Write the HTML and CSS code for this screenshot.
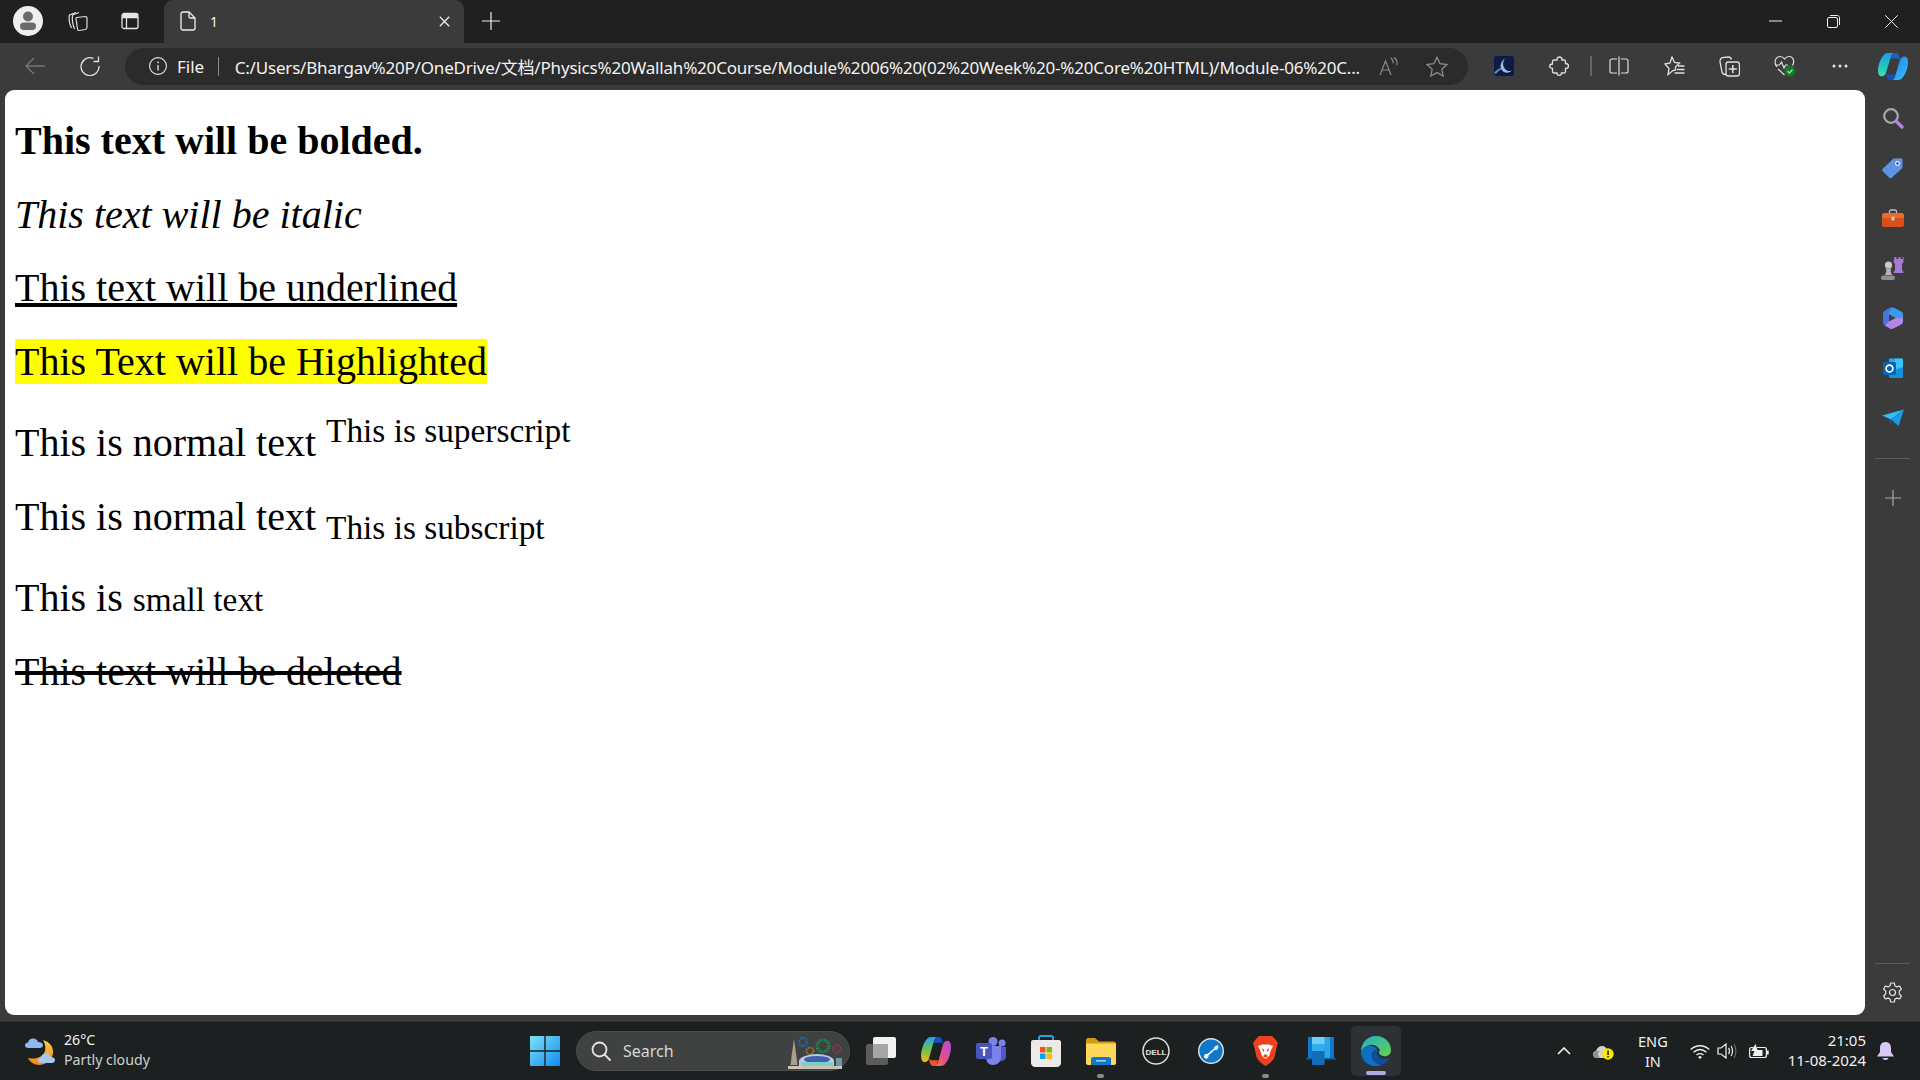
FILE: index.html
```html
<!DOCTYPE html>
<html lang="en">
<head>
<meta charset="utf-8">
<title>1</title>
<link rel="stylesheet" href="styles.css">
</head>
<body>
<div class="tabstrip">
  <svg class="profile" width="30" height="30" viewBox="0 0 30 30"><circle cx="15" cy="15" r="15" fill="#eee"/><circle cx="15" cy="10.500" r="5" fill="#6b6b6b"/><rect x="7" y="16.500" width="16" height="7.500" rx="3.750" fill="#6b6b6b"/></svg>
  <svg class="ico-collections-tab" width="22" height="22" viewBox="0 0 22 22" fill="none" stroke="#ddd" stroke-width="1.200"><path d="M9 2.500 2.500 5C1.500 9 2.500 14 4.500 18"/><path d="M12 2.500 5.500 5C5 9 5.500 14 7.500 19"/><path d="M9.500 7.500 18.500 6.500C20 6.500 20 7.500 20 8V17C20 18.500 19.500 19 18.500 19.500L12 20.500C11 20.500 10.500 20 10.500 19L9 8.500C9 8 9 7.500 9.500 7.500Z"/></svg>
  <svg class="ico-vtabs" width="18" height="18" viewBox="0 0 18 18" fill="none" stroke="#e6e6e6" stroke-width="1.300"><rect x="1" y="1.500" width="16" height="15" rx="2"/><path d="M5.500 5.500V16.500M1 5.500H17" /><path d="M1.500 2H16.500V5H1.500Z" fill="#e6e6e6" stroke="none"/></svg>
  <div class="tab">
    <svg class="ico-doc" width="16" height="20" viewBox="0 0 16 20" fill="none" stroke="#eee" stroke-width="1.300"><path d="M1 3C1 1.800 1.800 1 3 1H9L15 7V17C15 18.200 14.200 19 13 19H3C1.800 19 1 18.200 1 17Z"/><path d="M9 1V5.500C9 6.500 9.500 7 10.500 7H15"/></svg>
    <span class="tab-title">1</span>
    <svg class="tab-close" width="11" height="11" viewBox="0 0 11 11" stroke="#f0f0f0" stroke-width="1.300"><path d="M.8.800 10.200 10.200M10.200.8.800 10.200"/></svg>
  </div>
  <svg class="ico-newtab" width="18" height="18" viewBox="0 0 18 18" stroke="#eee" stroke-width="1.200"><path d="M9 0V18M0 9H18"/></svg>
  <div class="window-controls">
    <svg width="13" height="2" viewBox="0 0 13 2" stroke="#eee" stroke-width="1"><path d="M0 1H13"/></svg>
    <svg width="13" height="13" viewBox="0 0 13 13" fill="none" stroke="#eee" stroke-width="1"><rect x=".5" y="2.500" width="10" height="10" rx="1.500"/><path d="M3 .5H10.500C11.500.5 12.500 1.500 12.500 2.500V10"/></svg>
    <svg width="13" height="13" viewBox="0 0 13 13" stroke="#eee" stroke-width="1"><path d="M.3.3 12.700 12.700M12.700.3.3 12.700"/></svg>
  </div>
</div>

<div class="toolbar">
  <svg class="ico-back" width="20" height="18" viewBox="0 0 20 18" fill="none" stroke="#767676" stroke-width="1.300"><path d="M20 9H1M9 1 1 9 9 17"/></svg>
  <svg class="ico-refresh" width="20" height="20" viewBox="0 0 20 20" fill="none" stroke="#e0e0e0" stroke-width="1.300"><path d="M13.500 2.300A9 9 0 1 0 19 10"/><path d="M18.500 .5V5.500H13.500"/></svg>
  <div class="urlbar">
    <svg class="ico-info" width="18" height="18" viewBox="0 0 18 18" fill="none" stroke="#e8e8e8" stroke-width="1.100"><circle cx="9" cy="9" r="8.400"/><path d="M9 8V13.500" stroke-width="1.300"/><circle cx="9" cy="5.300" r=".9" fill="#e8e8e8" stroke="none"/></svg>
    <span class="url-file">File</span>
    <span class="url-sep"></span>
    <span class="url-text">C:/Users/Bhargav%20P/OneDrive/文档/Physics%20Wallah%20Course/Module%2006%20(02%20Week%20-%20Core%20HTML)/Module-06%20C...</span>
    <svg class="ico-read" width="20" height="19" viewBox="0 0 20 19" fill="none" stroke="#8a8a8a" stroke-width="1.200"><path d="M1 18 6.500 4 12 18M3 13H10"/><path d="M11.500 1C13.500 2 14.500 4 14 6.500M15 .5C17.500 2 18.500 5 17.500 8"/></svg>
    <svg class="ico-star" width="22" height="21" viewBox="0 0 22 21" fill="none" stroke="#8a8a8a" stroke-width="1.300"><path d="M11 1.200 14 7.600 21 8.500 15.800 13.300 17.200 20 11 16.600 4.800 20 6.200 13.300 1 8.500 8 7.600Z"/></svg>
  </div>
  <div class="toolbar-icons">
    <svg class="t-moon" width="20" height="20" viewBox="0 0 20 20"><rect width="20" height="20" rx="2.500" fill="#0c1c46"/><path d="M0 17C3 13 6 11.500 9 12 7 13.500 4 15 2 18Z" fill="#6f82b5"/><path d="M11 2.500C8 6 8.500 12 13 14.500 15 15.500 17 15 18 14 15.500 18 10 17.500 7.500 13.500 5.500 10 7 5 11 2.500Z" fill="#a9b6dc"/></svg>
    <svg class="t-puzzle" width="20" height="20" viewBox="0 0 20 20" fill="none" stroke="#e0e0e0" stroke-width="1.300"><path d="M8 4C8 2 9 1 10.500 1S13 2 13 4H15C16 4 16.500 4.500 16.500 5.500V7.500C18.500 7.500 19.500 8.800 19.500 10S18.500 12.500 16.500 12.500V15.500C16.500 16.500 16 17 15 17H12.500C12.500 18.500 11.500 19.300 10.300 19.300S8 18.500 8 17H5C4 17 3.500 16.500 3.500 15.500V12.500C2 12.500 .7 11.500 .7 10.200S2 8 3.500 8V5.500C3.500 4.500 4 4 5 4Z"/></svg>
    <span class="t-sep"></span>
    <svg class="t-split" width="20" height="20" viewBox="0 0 20 20" fill="none" stroke="#e0e0e0" stroke-width="1.200"><path d="M8 3H3C1.500 3 1 4 1 5V15C1 16 1.500 17 3 17H8M12 3H17C18.500 3 19 4 19 5V15C19 16 18.500 17 17 17H12M10 .5V19.500"/></svg>
    <svg class="t-fav" width="21" height="20" viewBox="0 0 21 20" fill="none" stroke="#e0e0e0" stroke-width="1.300"><path d="M8 1 10.500 6.500 15.500 7 11.500 11V14L9 14.500 4 18.500 5 12.500 1 8 6 7Z"/><path d="M14 11H20.500M13 14.500H20.500M10.500 18H20.500" transform="translate(0 -1)"/></svg>
    <svg class="t-coll" width="21" height="21" viewBox="0 0 21 21" fill="none" stroke="#e0e0e0" stroke-width="1.300"><path d="M7.500 18.500H6C4.500 18.500 3.500 17.500 3 16L1 6C1 3 2 2 3.500 1.700L9 1C11 .8 12 1.500 12.500 3.500"/><rect x="7" y="6" width="13.500" height="14" rx="2.500"/><path d="M13.800 9V17M9.800 13H17.800" stroke-width="1.500"/></svg>
    <span class="t-health"><svg width="22" height="22" viewBox="0 0 22 22" fill="none" stroke="#e0e0e0" stroke-width="1.200"><path d="M3 12C-1 7 2 1.500 6 1.500 8 1.500 9.500 2.500 10.500 4 11.500 2.500 13 1.500 15 1.500 19 1.500 21 6 18.500 10.500M1 10H5.500L7.500 7 10 13 11.500 10H14M4 14 10.500 20"/><circle cx="16" cy="16" r="5.500" fill="#0f7b25" stroke="none"/><path d="M13.500 16 15.500 18 18.500 14.500" stroke="#b9d8bf" stroke-width="1.200"/></svg></span>
    <svg class="t-dots" width="16" height="4" viewBox="0 0 16 4" fill="#e8e8e8"><circle cx="2" cy="2" r="1.500"/><circle cx="8" cy="2" r="1.500"/><circle cx="14" cy="2" r="1.500"/></svg>
    <svg class="t-copilot" width="30" height="27" viewBox="0 0 30 30" preserveAspectRatio="none"><defs><linearGradient id="cpa" x1="0" y1="0" x2="0" y2="1"><stop offset="0" stop-color="#1f9be8"/><stop offset=".6" stop-color="#25c6c0"/><stop offset="1" stop-color="#45e0a0"/></linearGradient><linearGradient id="cpb" x1="0" y1="0" x2="1" y2="1"><stop offset="0" stop-color="#1a7ee8"/><stop offset="1" stop-color="#38c0f8"/></linearGradient></defs><path d="M10 0H18C15 0 13.500 2 13 4L8 22C7.500 24 6 26 3.500 26 1.500 26 0 24 0 20 0 13 3 5 6 2 7 .7 8.500 0 10 0Z" fill="url(#cpa)"/><path d="M20 30H12C15 30 16.500 28 17 26L22 8C22.500 6 24 4 26.500 4 28.500 4 30 6 30 10 30 17 27 25 24 28 23 29.300 21.500 30 20 30Z" fill="url(#cpb)"/><path d="M15 0H18C20.500 0 21.500 3 22 8 21 6 19.500 6 18 6H13L13.500 3C14 1.500 14.500 .5 15 0Z" fill="#1a5fc8"/><path d="M15 30H12C9.500 30 8.500 27 8 22 9 24 10.500 24 12 24H17L16.500 27C16 28.500 15.500 29.500 15 30Z" fill="#1450b8"/></svg>
  </div>
</div>

<div class="workspace">
  <main class="page">
    <p class="line"><b>This text will be bolded.</b></p>
    <p class="line"><i>This text will be italic</i></p>
    <p class="line"><u class="thick">This text will be underlined</u></p>
    <p class="line"><mark>This Text will be Highlighted</mark></p>
    <p class="line">This is normal text <sup>This is superscript</sup></p>
    <p class="line line-sub">This is normal text <sub>This is subscript</sub></p>
    <p class="line">This is <small>small text</small></p>
    <p class="line"><del class="thick">This text will be deleted</del></p>
  </main>
  <aside class="sidebar">
    <div class="side-item"><svg width="22" height="22" viewBox="0 0 22 22" fill="none"><circle cx="9" cy="9" r="6.800" stroke="#a8a8a8" stroke-width="2.200"/><path d="M14 14 20 20" stroke="#b084e0" stroke-width="3.400" stroke-linecap="round"/></svg></div>
    <div class="side-item"><svg width="21" height="21" viewBox="0 0 21 21"><path d="M12 .5H19C20 .5 20.500 1 20.500 2V9C20.500 10 20 10.500 19.500 11L10 19.500C9 20.500 8 20.500 7 19.500L1 13.500C0 12.500 0 11.500 1 10.500L10.500 1.500C11 1 11.500.5 12 .5Z" fill="#5f93e6"/><circle cx="15.500" cy="5.500" r="2.500" fill="#e8eefb"/><circle cx="15.500" cy="5.500" r="1.200" fill="#3d3d3d"/></svg></div>
    <div class="side-item"><svg width="22" height="18" viewBox="0 0 22 18"><path d="M7.500 5V2.500C7.500 1.500 8 1 9 1H13C14 1 14.500 1.500 14.500 2.500V5" fill="none" stroke="#bdbdbd" stroke-width="1.300"/><path d="M2 4H20C21 4 22 5 22 6V9H0V6C0 5 1 4 2 4Z" fill="#ee6a27"/><path d="M0 9H22V16C22 17 21 18 20 18H2C1 18 0 17 0 16Z" fill="#d9501a"/><rect x="9.500" y="7.500" width="3" height="4" rx="1" fill="#cfcfcf"/></svg></div>
    <div class="side-item"><svg width="23" height="23" viewBox="0 0 23 23"><path d="M14 1H16V3H18V1H20V3H22V1H23V6L21.500 8V14L23 16V17H13V16L14.500 14V8L13 6Z" fill="#a679d8" transform="translate(-.5 -1)"/><circle cx="7.500" cy="8" r="3.600" fill="#c9c9c9"/><path d="M4.500 11.500H10.500L9.500 14 11 18H4L5.500 14Z" fill="#b4b4b4"/><rect x="0" y="18.500" width="14" height="4.500" rx="2" fill="#8f8f8f"/></svg></div>
    <div class="side-item"><svg width="20" height="22" viewBox="0 0 20 22"><defs><linearGradient id="msa" x1="0" y1="0" x2="1" y2="1"><stop offset="0" stop-color="#2f7fe0"/><stop offset="1" stop-color="#8a55d8"/></linearGradient></defs><path d="M10 .5 18 4.500C19.500 5.500 20 6.500 20 8V14C20 15.500 19.500 16.500 18 17.500L10 21.500C9 22 8 22 7 21.500L2 18.500C.5 17.500 0 16.500 0 15V7C0 5.500 .5 4.500 2 3.500L7 .5C8 0 9 0 10 .5Z" fill="url(#msa)"/><path d="M6 7.500 13 11 6 14.500Z" fill="#3d3d3d"/><path d="M2 18.500 6 14.500 13 11 20 8V14C20 15.500 19.500 16.500 18 17.500L10 21.500C9 22 8 22 7 21.500Z" fill="#b287e6"/><path d="M6 7 13 11H20V8C20 6.500 19.500 5.500 18 4.500L10 .5C8 2 6 4 6 7Z" fill="#3c9be8"/></svg></div>
    <div class="side-item"><svg width="20" height="20" viewBox="0 0 20 20"><path d="M6 .5H18C19 .5 20 1.500 20 2.500V19H6Z" fill="#28a8ea"/><path d="M6 10 20 9V18.500C20 19.500 19 20 18.500 20H8C7 20 6 19.500 6 18.500Z" fill="#1490df"/><path d="M12 .5H20V9L12 12Z" fill="#50d9ff" opacity=".55"/><rect x="0" y="4" width="13" height="13" rx="1.500" fill="#0364b8"/><circle cx="6.500" cy="10.500" r="3.400" fill="none" stroke="#fff" stroke-width="1.700"/></svg></div>
    <div class="side-item"><svg width="22" height="18" viewBox="0 0 22 18"><path d="M0 6.500 22 .5 9 10.500Z" fill="#32bdf4"/><path d="M22 .5 16.500 17 9 10.500Z" fill="#1a9ae6"/><path d="M7 9.500 9 10.500 8 16 Z" fill="#0f62ad"/></svg></div>
    <div class="side-divider"></div>
    <div class="side-item side-plus"><svg width="16" height="16" viewBox="0 0 16 16" stroke="#a8a8a8" stroke-width="1.200"><path d="M8 0V16M0 8H16"/></svg></div>
    <div class="side-spacer"></div>
    <div class="side-divider side-divider-bottom"></div>
    <div class="side-item side-gear"><svg width="21" height="21" viewBox="0 0 21 21" fill="none" stroke="#e6e6e6" stroke-width="1.200"><path d="M8.700 1H12.300L12.900 3.700 14.900 4.900 17.600 4 19.400 7.100 17.300 9 17.300 12 19.400 13.900 17.600 17 14.900 16.100 12.900 17.300 12.300 20H8.700L8.100 17.300 6.100 16.100 3.400 17 1.600 13.900 3.700 12 3.700 9 1.600 7.100 3.400 4 6.100 4.900 8.100 3.700Z" stroke-linejoin="round"/><circle cx="10.500" cy="10.500" r="3"/></svg></div>
  </aside>
</div>

<footer class="taskbar">
  <div class="weather">
    <svg width="30" height="27" viewBox="0 0 30 27"><defs><linearGradient id="moonw" x1="0" y1="0" x2="0" y2="1"><stop offset="0" stop-color="#ffcf3f"/><stop offset="1" stop-color="#f0861b"/></linearGradient></defs><path d="M18 2C25 4 28.500 9 28 15 27.500 22 21 27 14 27 9 27 5 24 3 20 11 22 18 19 20 13 21 9 20 5 18 2Z" fill="url(#moonw)"/><path d="M3.500 10C1 10 0 8.500 0 7.200 0 5.500 1.500 4.500 3 4.500 3.500 2 5.500 .5 8 .5 10.500 .5 12.500 2 13 4 15.500 4 18 5 18 7 18 9 16.500 10 14.500 10Z" fill="#8fb8ee"/><path d="M16.500 25C14 25 13 23.500 13 22.200 13 20.500 14.500 19.500 16 19.500 16.500 17 18.500 15.500 21 15.500 23.500 15.500 25 17 25.500 19 28 19 30 20 30 22 30 24 28.500 25 27 25Z" fill="#a6c7f2"/></svg>
    <div class="weather-text"><span class="w-temp">26°C</span><span class="w-desc">Partly cloudy</span></div>
  </div>
  <div class="task-center">
    <svg class="winlogo" width="30" height="30" viewBox="0 0 30 30"><defs><linearGradient id="win" x1="0" y1="0" x2="1" y2="1"><stop offset="0" stop-color="#7fe0f7"/><stop offset="1" stop-color="#0f8df0"/></linearGradient></defs><path d="M0 1C0 .4.4 0 1 0H14.300V14.300H0ZM15.700 0H29C29.600 0 30 .4 30 1V14.300H15.700ZM0 15.700H14.300V30H1C.4 30 0 29.600 0 29ZM15.700 15.700H30V29C30 29.600 29.600 30 29 30H15.700Z" fill="url(#win)"/></svg>
    <div class="searchbox">
      <svg width="20" height="20" viewBox="0 0 20 20" fill="none" stroke="#e4e4e4" stroke-width="1.800"><circle cx="8.500" cy="8.500" r="7"/><path d="M13.500 13.500 19 19" stroke-linecap="round"/></svg>
      <span class="search-label">Search</span>
      <svg class="search-art" width="58" height="36" viewBox="0 0 58 36"><path d="M8 6 10 20 11.500 32H4.500L6 20Z" fill="#a89f92"/><circle cx="17" cy="9" r="4" fill="none" stroke="#2f6fb7" stroke-width="2.500" stroke-dasharray="1 1.200"/><circle cx="24" cy="18" r="3.500" fill="none" stroke="#a8842c" stroke-width="2" stroke-dasharray="1 1"/><circle cx="37" cy="13" r="6" fill="none" stroke="#239a60" stroke-width="3" stroke-dasharray="1 1.200"/><circle cx="51" cy="16" r="3.800" fill="none" stroke="#a83045" stroke-width="2.500" stroke-dasharray="1 1.100"/><path d="M13 28C13 24 23 21 31 21S48 24 48 28V33H13Z" fill="#b9c8e6"/><ellipse cx="31" cy="26.500" rx="13" ry="3.500" fill="#3f5fb0"/><path d="M15 29H47V33H15Z" fill="#7fd0c0"/><rect x="50" y="25" width="6" height="9" fill="#6f97a8"/><path d="M2 33H56V36H2Z" fill="#c9c4b6"/></svg>
    </div>
    <div class="task-icons">
      <span class="task-item"><svg width="30" height="28" viewBox="0 0 30 28"><rect x="0" y="7" width="22" height="21" rx="2" fill="#5c5c5c"/><rect x="7" y="0" width="23" height="21" rx="2" fill="#f2f2f2"/><rect x="7" y="7" width="15" height="14" rx="1" fill="#a6a6a6"/></svg></span>
      <span class="task-item"><svg width="30" height="29" viewBox="0 0 30 30" preserveAspectRatio="none"><defs><linearGradient id="cp1" x1="0" y1="0" x2="0" y2="1"><stop offset="0" stop-color="#1fa7ef"/><stop offset=".5" stop-color="#6bc14a"/><stop offset="1" stop-color="#f5b81c"/></linearGradient><linearGradient id="cp2" x1="1" y1="0" x2="0" y2="1"><stop offset="0" stop-color="#b44be0"/><stop offset=".6" stop-color="#e74f80"/><stop offset="1" stop-color="#f5842a"/></linearGradient></defs><path d="M10 0H18C15 0 13.500 2 13 4L8 22C7.500 24 6 26 3.500 26 1.500 26 0 24 0 20 0 13 3 5 6 2 7 .7 8.500 0 10 0Z" fill="url(#cp1)"/><path d="M20 30H12C15 30 16.500 28 17 26L22 8C22.500 6 24 4 26.500 4 28.500 4 30 6 30 10 30 17 27 25 24 28 23 29.300 21.500 30 20 30Z" fill="url(#cp2)"/><path d="M15 0H18C20.500 0 21.500 3 22 8 21 6 19.500 6 18 6H13L13.500 3C14 1.500 14.500 .5 15 0Z" fill="#1450c8"/><path d="M15 30H12C9.500 30 8.500 27 8 22 9 24 10.500 24 12 24H17L16.500 27C16 28.500 15.500 29.500 15 30Z" fill="#f0502a"/></svg></span>
      <span class="task-item"><svg width="30" height="28" viewBox="0 0 30 28"><circle cx="26" cy="6" r="3.500" fill="#7b83eb"/><circle cx="17" cy="4.500" r="4.500" fill="#7b83eb"/><path d="M21 10H30V19C30 23 27 24 25 24H21Z" fill="#5059c9"/><path d="M10 9H25V20C25 25 21 28 17 28 13 28 10 25 10 20Z" fill="#7b83eb"/><rect x="0" y="6" width="16" height="16" rx="2" fill="#4b53bc"/><text x="8" y="19" class="teams-t">T</text></svg></span>
      <span class="task-item"><svg width="30" height="32" viewBox="0 0 30 32"><path d="M8 7V3C8 1.500 9 1 10 1H20C21 1 22 1.500 22 3V7" fill="none" stroke="#18a8e0" stroke-width="2"/><path d="M2 5H28C29 5 30 6 30 7V28C30 30 28 32 26 32H4C2 32 0 30 0 28V7C0 6 1 5 2 5Z" fill="#eceae6"/><rect x="9" y="12" width="5.500" height="5.500" fill="#f25022"/><rect x="15.500" y="12" width="5.500" height="5.500" fill="#7fba00"/><rect x="9" y="18.500" width="5.500" height="5.500" fill="#00a4ef"/><rect x="15.500" y="18.500" width="5.500" height="5.500" fill="#ffb900"/></svg></span>
      <span class="task-item has-dot"><svg width="30" height="27" viewBox="0 0 30 27"><path d="M0 2C0 1 1 0 2 0H9L13 3.500H28C29 3.500 30 4.500 30 5.500V8H0Z" fill="#d49b0f"/><path d="M0 5.500H30V25C30 26 29 27 28 27H2C1 27 0 26 0 25Z" fill="#ffd75a"/><path d="M5 21C5 20 6 19 7 19H23C24 19 25 20 25 21V27H5Z" fill="#1177c9"/><rect x="10" y="22" width="10" height="1.600" fill="#9ad0f5"/></svg></span>
      <span class="task-item"><svg width="28" height="28" viewBox="0 0 28 28"><circle cx="14" cy="14" r="13" fill="none" stroke="#dcdcdc" stroke-width="1.500"/><text x="14" y="17.500" class="dell-t">DELL</text></svg></span>
      <span class="task-item"><svg width="26" height="26" viewBox="0 0 26 26"><circle cx="13" cy="13" r="12.300" fill="#1078c9" stroke="#d6e4f0" stroke-width="1.400"/><path d="M20 7 16.500 8.500 16 10.500 9.500 16C8 15.500 6 16.500 6 18.500S8 21 9.500 20.500C10.500 19.500 10.500 18.500 10.500 17.500L16.500 12 19 12C20.500 10.500 20.500 9 20 7Z" fill="#eef6fc"/></svg></span>
      <span class="task-item has-dot"><svg width="25" height="30" viewBox="0 0 25 30"><path d="M6 0H19L22 3 25 7 23.500 12 21.500 21C20 25 16 28 12.500 30 9 28 5 25 3.500 21L1.500 12 0 7 3 3Z" fill="#f1411f"/><path d="M5 10 9 8.500H16L20 10 18 14 16 20 12.500 23 9 20 7 14Z" fill="#fff"/><path d="M9 12 11.500 14 10 16ZM16 12 13.500 14 15 16ZM10 20 12.500 18 15 20 12.500 22Z" fill="#f1411f"/></svg></span>
      <span class="task-item"><svg width="30" height="28" viewBox="0 0 30 28"><rect x="2" y="0" width="26" height="21" fill="#0f78c8"/><rect x="6" y="0" width="18" height="21" fill="#2ea5e8"/><path d="M0 21H30V22.500H0Z" fill="#0e5a9a"/><rect x="6" y="11" width="12.500" height="17" fill="#116cbc"/><rect x="6" y="0" width="12.500" height="7" fill="#6fd0f7"/><rect x="6" y="7" width="12.500" height="7" fill="#32aeee"/></svg></span>
      <span class="task-item task-active"><svg width="30" height="30" viewBox="0 0 30 30"><defs><linearGradient id="edg" x1="0" y1="0" x2="1" y2="1"><stop offset="0" stop-color="#1fb0c8"/><stop offset="1" stop-color="#66d152"/></linearGradient></defs><path d="M15 0C24 0 30 7 30 14 30 19 26 21 22 20 18 19 17 16 19 14 17 10 13 8 9 9 5 10 1 13 0 16 0 7 6 0 15 0Z" fill="url(#edg)"/><path d="M0 16C1 12 5 10 9 10 13 10 16 12 16 14 12 14 10 17 11 21 12 25 17 29 21 29 18 30 16 30 14 30 6 30 0 23 0 16Z" fill="#0f6fc5"/><path d="M16 14C13 14 11 17 11 20 11.500 25 16 29 21 29 24 28 27 25 29 22 25 24 19 23 17 20 15 17 17 15 19 14 18 14 17 14 16 14Z" fill="#0b4f9e"/></svg></span>
    </div>
  </div>
  <div class="tray">
    <svg class="tray-chev" width="14" height="8" viewBox="0 0 14 8" fill="none" stroke="#f0f0f0" stroke-width="1.600"><path d="M1 7 7 1 13 7"/></svg>
    <svg class="tray-drive" width="21" height="15" viewBox="0 0 21 15"><path d="M4 13C1 13 0 11 0 9.500 0 7.500 1.500 6 3 6 4 3 6 1 9 1 12 1 14 3 14.500 6 15 8 15 13 13 13Z" fill="#d2d2d2"/><path d="M0 10C1 6 5 5 7 6 4 7 5 11 7 13H4C2 13 .5 12 0 10Z" fill="#8f8f8f"/><circle cx="15" cy="9" r="5.700" fill="#ffe500"/><rect x="14.300" y="5.500" width="1.500" height="4.500" fill="#222"/><rect x="14.300" y="11" width="1.500" height="1.500" fill="#222"/></svg>
    <div class="tray-lang"><span>ENG</span><span>IN</span></div>
    <svg class="tray-wifi" width="20" height="15" viewBox="0 0 20 15" fill="none" stroke="#f0f0f0" stroke-width="1.300"><path d="M.7 5.500C6 .5 14 .5 19.300 5.500M3.500 8.300C7.500 4.800 12.500 4.800 16.500 8.300M6.500 11C8.500 9.500 11.500 9.500 13.500 11"/><circle cx="10" cy="13.300" r="1.400" fill="#f0f0f0" stroke="none"/></svg>
    <svg class="tray-vol" width="20" height="16" viewBox="0 0 20 16" fill="none" stroke="#f0f0f0" stroke-width="1.200"><path d="M1 5H4L9 1V15L4 11H1Z"/><path d="M11.500 5C12.800 6.500 12.800 9.500 11.500 11M14 3C16 5.500 16 10.500 14 13"/><path d="M17 1C19.500 5 19.500 11 17 15" stroke="#666"/></svg>
    <svg class="tray-batt" width="20" height="15" viewBox="0 0 20 15" fill="none" stroke="#f0f0f0" stroke-width="1.200"><path d="M4 3.500H2.500C1.300 3.500.6 4.200.6 5.500V11.500C.6 12.800 1.300 13.500 2.500 13.500H15.500C16.700 13.500 17.400 12.800 17.400 11.500V5.500C17.400 4.200 16.700 3.500 15.500 3.500H8"/><path d="M18.800 6.500V10.500" stroke-width="1.800"/><path d="M6.500 0 2 7H5.500L3.500 12H13.500V6H8.500Z" fill="#f0f0f0" stroke="none"/></svg>
    <div class="tray-clock"><span>21:05</span><span>11-08-2024</span></div>
    <svg class="tray-bell" width="17" height="19" viewBox="0 0 17 19" fill="#d9c8f5"><path d="M8.500 0C12.500 0 14 3 14 6V10L17 14.500H0L3 10V6C3 3 4.500 0 8.500 0Z"/><path d="M5.500 16H11.500C11 18.500 6 18.500 5.500 16Z"/></svg>
  </div>
</footer>
</body>
</html>
```
FILE: styles.css
```css
* { box-sizing: border-box; }
html, body { margin: 0; padding: 0; }
body {
  width: 1920px;
  height: 1080px;
  overflow: hidden;
  display: flex;
  flex-direction: column;
  background: #3b3b3b;
  font-family: "Noto Sans", "Noto Sans CJK SC", sans-serif;
  color: #f0f0f0;
}
svg { display: block; flex: none; }

/* tab strip */
.tabstrip {
  height: 43px;
  flex: none;
  background: #202020;
  display: flex;
  align-items: center;
  padding-left: 13px;
  padding-bottom: 1px;
}
.ico-collections-tab { margin-left: 24px; }
.ico-vtabs { margin-left: 32px; }
.tab {
  width: 300px;
  height: 43px;
  margin-left: 25px;
  margin-bottom: -1px;
  background: #3b3b3b;
  border-radius: 9px 9px 0 0;
  display: flex;
  align-items: center;
  padding-left: 16px;
  padding-bottom: 1px;
}
.tab-title { margin-left: 14px; font-size: 14px; color: #eee; }
.tab-close { margin-left: auto; margin-right: 14px; }
.ico-newtab { margin-left: 18px; }
.window-controls { margin-left: auto; display: flex; align-items: center; gap: 45px; padding-right: 22px; }

/* toolbar */
.toolbar {
  height: 47px;
  flex: none;
  background: #3b3b3b;
  display: flex;
  align-items: center;
  padding-left: 25px;
}
.ico-back, .ico-refresh, .toolbar-icons { margin-bottom: 1px; }
.ico-refresh { margin-left: 35px; }
.urlbar {
  width: 1343px;
  height: 37px;
  margin-left: 25px;
  background: #2b2b2b;
  border-radius: 19px;
  display: flex;
  align-items: center;
  padding-left: 24px;
  padding-bottom: 1px;
}
.url-file { margin-left: 10px; font-size: 17px; color: #f2f2f2; }
.url-sep { width: 1px; height: 19px; background: #8a8a8a; margin-left: 13.5px; }
.url-text { margin-left: 16px; width: 1126px; white-space: nowrap; font-size: 17px; letter-spacing: -.19px; color: #f2f2f2; overflow: hidden; }
.ico-read { margin-left: 18px; }
.ico-star { margin-left: 27px; }
.toolbar-icons { display: flex; align-items: center; margin-left: 26px; }
.t-puzzle { margin-left: 35px; }
.t-sep { width: 2px; height: 20px; background: #666; margin-left: 21px; }
.t-split { margin-left: 17px; }
.t-fav { margin-left: 35px; }
.t-coll { margin-left: 34px; }
.t-health { margin-left: 34px; }
.t-dots { margin-left: 36px; }
.t-copilot { margin-left: 30px; }

/* workspace */
.workspace {
  height: 925px;
  flex: none;
  display: flex;
  padding-left: 5px;
}
.page {
  width: 1860px;
  background: #fff;
  border-radius: 9px;
  padding: 27px 10px 0;
  font-family: "Liberation Serif", "Times New Roman", serif;
  font-size: 40px;
  color: #000;
}
.line { margin: 0 0 26.67px; }
.line-sub { margin-bottom: 27.67px; }
.thick { text-decoration-thickness: 4px; }
mark { background: #ff0; color: #000; }

.sidebar { width: 55px; display: flex; flex-direction: column; align-items: center; padding-top: 3px; }
.side-item { height: 50px; width: 100%; display: flex; align-items: center; justify-content: center; }
.side-divider { width: 35px; height: 1px; background: #5c5c5c; margin-top: 15px; }
.side-plus { margin-top: 14px; }
.side-spacer { flex: 1; }
.side-divider-bottom { margin: 0; }
.side-gear { margin-top: 5px; height: 46px; }

/* taskbar */
.taskbar {
  height: 59px;
  flex: none;
  margin-top: 6px;
  background: #1c2021;
  border-top: 1px solid #2e3233;
  display: flex;
  align-items: center;
  position: relative;
}
.weather { display: flex; align-items: center; padding-left: 25px; width: 530px; }
.weather-text { display: flex; flex-direction: column; margin-left: 9px; margin-top: -2px; font-size: 14.2px; line-height: 20px; }
.w-temp { color: #f0f0f0; }
.w-desc { color: #d0d0d0; }
.task-center { display: flex; align-items: center; }
.searchbox {
  width: 274px;
  height: 40px;
  margin-left: 16px;
  background: #3f4240;
  border: 1px solid #4a4d4b;
  border-radius: 20px;
  display: flex;
  align-items: center;
  padding-left: 14px;
}
.search-label { margin-left: 12px; font-size: 16px; color: #d8d8d8; }
.search-art { margin-left: auto; margin-right: 5px; }
.task-icons { display: flex; align-items: center; margin-left: 3px; }
.task-item {
  width: 55px;
  height: 50px;
  display: flex;
  align-items: center;
  justify-content: center;
  position: relative;
}
.has-dot::after {
  content: "";
  position: absolute;
  left: 24px;
  bottom: -2px;
  width: 7px;
  height: 4px;
  border-radius: 2px;
  background: #8c8c8c;
}
.task-active { background: #2d3133; border-radius: 5px; width: 50px; margin-left: 3px; }
.task-active::after {
  content: "";
  position: absolute;
  left: 15px;
  bottom: 1px;
  width: 20px;
  height: 4px;
  border-radius: 2px;
  background: #b4a7e6;
}
.teams-t { font: bold 13px "Liberation Sans", sans-serif; fill: #fff; text-anchor: middle; }
.dell-t { font: bold 8px "Liberation Sans", sans-serif; fill: #e4e4e4; text-anchor: middle; }
.tray { position: absolute; right: 0; top: 0; bottom: 0; display: flex; align-items: center; }
.tray-drive { margin-left: 22.5px; margin-top: 3px; }
.tray-lang { display: flex; flex-direction: column; align-items: center; width: 40px; margin-left: 18.5px; font-size: 14.5px; line-height: 20px; color: #f0f0f0; }
.tray-wifi { margin-left: 17px; }
.tray-vol { margin-left: 7px; }
.tray-batt { margin-left: 12px; }
.tray-clock { display: flex; flex-direction: column; align-items: flex-end; margin-left: 18.8px; margin-top: -2px; font-size: 15px; line-height: 20px; color: #f0f0f0; }
.tray-bell { margin-left: 10.5px; margin-right: 26.5px; }
```
